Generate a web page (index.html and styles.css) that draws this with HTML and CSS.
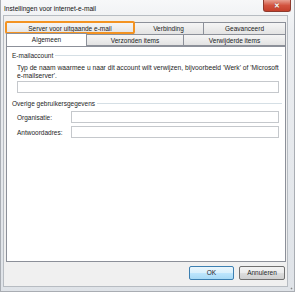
FILE: index.html
```html
<!DOCTYPE html>
<html>
<head>
<meta charset="utf-8">
<link rel="stylesheet" href="styles.css">
</head>
<body>
<div class="window">
  <div class="titlebar">
    <span class="title">Instellingen voor internet-e-mail</span>
    <span class="close">✕</span>
  </div>
  <div class="client">
    <div class="tabs">
      <div class="tabrow">
        <div class="tab t-server">Server voor uitgaande e-mail</div>
        <div class="tab t-verb">Verbinding</div>
        <div class="tab t-geav">Geavanceerd</div>
      </div>
      <div class="tabrow">
        <div class="tab t-alg active">Algemeen</div>
        <div class="tab t-verz">Verzonden items</div>
        <div class="tab t-verw">Verwijderde items</div>
      </div>
      <div class="highlight"></div>
    </div>
    <div class="panel">
      <div class="group"><span>E-mailaccount</span><i class="rule"></i></div>
      <p class="desc">Typ de naam waarmee u naar dit account wilt verwijzen, bijvoorbeeld 'Werk' of 'Microsoft <span class="nowrap">e-mailserver'.</span></p>
      <div class="input wide"></div>
      <div class="group g2"><span>Overige gebruikersgegevens</span><i class="rule"></i></div>
      <div class="field"><label>Organisatie:</label><div class="input"></div></div>
      <div class="field"><label>Antwoordadres:</label><div class="input"></div></div>
    </div>
    <div class="buttons">
      <div class="btn default">OK</div>
      <div class="btn">Annuleren</div>
    </div>
  </div>
  <div class="grip"></div>
</div>
</body>
</html>
```

FILE: styles.css
```css
* { box-sizing: border-box; }
html, body { margin: 0; padding: 0; background: #ffffff; }
body { font-family: "Liberation Sans", Arial, sans-serif; font-size: 6.5px; color: #1e1e1e; width: 300px; height: 293px; overflow: hidden; }

.window {
  position: relative;
  width: 295px;
  height: 292px;
  background: linear-gradient(#f7f8f9, #eceef1 30px, #dfe3e8);
  border: 1px solid #a9adb3;
  border-top: none;
  padding: 0 6px 4px 2px;
  display: flex;
  flex-direction: column;
}
.titlebar {
  height: 17px;
  display: flex;
  justify-content: space-between;
  align-items: flex-start;
  padding-left: 1px;
}
.title { font-size: 6.6px; color: #111; margin-top: 5px; }
.close {
  width: 28px;
  height: 12px;
  margin-right: -3px;
  background: linear-gradient(#e8a192, #d2533f 50%, #c4402b);
  border: 1px solid #8e3a2d;
  border-top: none;
  border-radius: 0 0 3px 3px;
  color: #fff;
  font-size: 7px;
  font-weight: bold;
  line-height: 11px;
  text-align: center;
  text-shadow: 0 0 1px #6a2418;
}
.client {
  flex: 1;
  background: #f0f0f0;
  border: 1px solid #b7bcc2;
  padding: 6px 1px 6px 2px;
  display: flex;
  flex-direction: column;
}
.tabs { position: relative; display: flex; flex-direction: column; }
.tabrow { display: flex; height: 12px; }
.tab {
  height: 12px;
  border: 1px solid #8c9099;
  border-left: none;
  border-bottom: none;
  background: linear-gradient(#f5f5f5, #e3e3e3);
  text-align: center;
  line-height: 11px;
  color: #1a1a1a;
}
.tabrow .tab:first-child { border-left: 1px solid #8c9099; }
.t-server { width: 128px; }
.t-verb { width: 70px; }
.t-geav { width: 82px; }
.t-alg { width: 81px; }
.t-verz { width: 97px; border-bottom: 1px solid #8c9099; }
.t-verw { width: 102px; border-bottom: 1px solid #8c9099; }
.tab.active { background: #ffffff; height: 13px; margin-top: -1px; line-height: 12px; position: relative; z-index: 1; }
.highlight {
  position: absolute;
  left: -1px;
  top: -1px;
  width: 130px;
  height: 13px;
  border: 2px solid #f39322;
  border-radius: 2px;
}
.panel {
  width: 280px;
  height: 216px;
  background: #fff;
  border: 1px solid #8c9099;
  padding: 4px 3px 0 5px;
  display: flex;
  flex-direction: column;
}
.group { display: flex; align-items: center; height: 8px; }
.group .rule { flex: 1; height: 2px; border-top: 1px solid #d5dfe5; border-bottom: 1px solid #fff; margin-left: 2px; margin-top: 1px; }
.g2 { margin-top: 6px; }
.desc { margin: 5px 3px 0 5px; line-height: 7.6px; font-size: 6.7px; }
.nowrap { white-space: nowrap; }
.input { height: 12px; border: 1px solid #c5c8cc; background: #fff; flex: 1; }
.input.wide { flex: none; margin: 2px 3px 0 5px; }
.field { display: flex; align-items: center; margin: 3px 3px 0 5px; }
.g2 + .field { margin-top: 4px; }
.field label { width: 54px; }
.buttons { display: flex; justify-content: flex-end; gap: 5px; margin-top: 4px; padding-right: 1px; }
.btn {
  height: 14px;
  border: 1px solid #707070;
  border-radius: 2px;
  background: linear-gradient(#f2f2f2, #ebebeb 50%, #dddddd 51%, #cfcfcf);
  text-align: center;
  line-height: 12px;
  width: 46px;
}
.btn.default { width: 45px; border-color: #3c7fb1; background: linear-gradient(#eaf6fd, #d9f0fc 50%, #bee6fd 51%, #a7d9f5); }
.grip {
  position: absolute;
  right: 1px;
  bottom: 1px;
  width: 3px;
  height: 3px;
  background: radial-gradient(circle, #888 40%, transparent 50%);
}
```
